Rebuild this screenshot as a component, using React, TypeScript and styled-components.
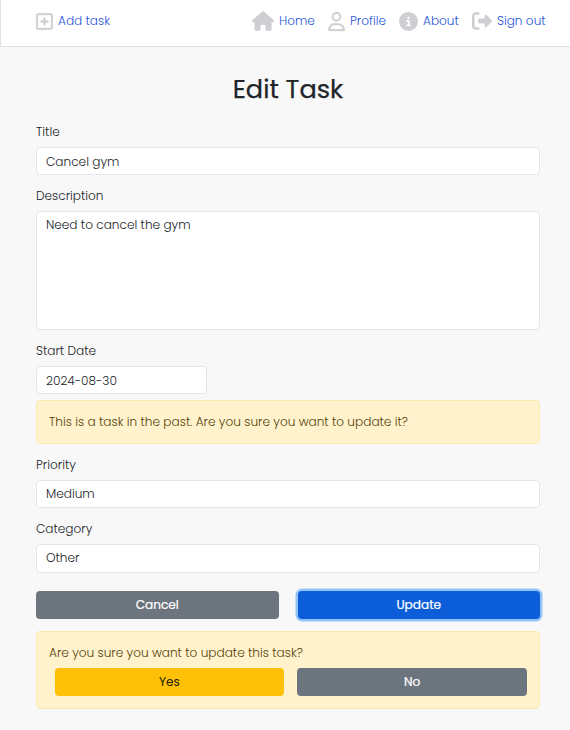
import React from "react";
import styled, { createGlobalStyle, css } from "styled-components";
import {
  FaCircleInfo,
  FaHouse,
  FaRegSquarePlus,
  FaRegUser,
  FaRightFromBracket,
} from "react-icons/fa6";

const GlobalStyle = createGlobalStyle`
  *, *::before, *::after { box-sizing: border-box; }
  body {
    margin: 0;
    background: #f8f8f8;
    color: #212529;
    font-family: Poppins, Inter, "Open Sans", sans-serif;
    font-size: 12.12px;
    font-weight: 300;
    line-height: 18px;
  }
`;

const Page = styled.div`
  min-height: 730px;
  overflow: hidden;
`;

const Navbar = styled.nav`
  display: flex;
  justify-content: space-between;
  height: 47px;
  padding: 10px 24px 0 33.5px;
  background: #fff;
  border-left: 1px solid #dee0e2;
  border-bottom: 1px solid #dee0e2;
`;

const NavGroup = styled.div`
  display: flex;
  height: 22px;
`;

const NavLink = styled.a<{ $width: number; $gap?: number; $outlined?: boolean }>`
  display: flex;
  align-items: center;
  gap: ${(p) => p.$gap ?? 5}px;
  width: ${(p) => p.$width}px;
  color: #2856d8;
  text-decoration: none;
  white-space: nowrap;

  svg {
    flex: none;
    color: #cfced3;
    overflow: visible;
    stroke-width: ${(p) => (p.$outlined ? 8 : 0)}px;
  }
`;

const Form = styled.form`
  display: flex;
  flex-direction: column;
  width: 504px;
  margin-left: 36px;
`;

const Heading = styled.h1`
  margin: 24px 0 0;
  height: 52px;
  font-size: 25.6px;
  font-weight: 400;
  line-height: 36px;
  text-align: center;
  -webkit-text-stroke: 0.25px currentColor;
`;

const Field = styled.div<{ $before?: number; $after?: number }>`
  display: flex;
  flex-direction: column;
  margin-top: ${(p) => p.$before ?? 0}px;
  margin-bottom: ${(p) => p.$after ?? 12}px;
`;

const Label = styled.label`
  height: 24px;
`;

const control = css`
  display: block;
  width: 100%;
  height: 28px;
  margin: 0;
  padding: 0 9px;
  border: 1px solid #e3e5e8;
  border-radius: 4px;
  outline: none;
  background: #fff;
  color: #212529;
  font: inherit;
`;

const Input = styled.input<{ $width?: number }>`
  ${control}
  width: ${(p) => (p.$width ? `${p.$width}px` : "100%")};
  padding-top: 2px;
`;

const TextArea = styled.textarea`
  ${control}
  height: 119px;
  padding: 4px 9px;
  resize: none;
`;

const Select = styled.select<{ $height?: number }>`
  ${control}
  height: ${(p) => p.$height ?? 28}px;
  padding-bottom: ${(p) => (p.$height ? 1 : 0)}px;
  appearance: none;
`;

const Alert = styled.div<{ $height: number; $before?: number }>`
  height: ${(p) => p.$height}px;
  margin-top: ${(p) => p.$before ?? 0}px;
  padding: 12px;
  border: 1px solid #fbe8b0;
  border-radius: 4px;
  background: #fff2cd;
  color: #574409;
`;

const Message = styled.p`
  margin: 0;
`;

const ButtonRow = styled.div<{ $inset?: boolean }>`
  display: grid;
  grid-template-columns: 1fr 1fr;
  column-gap: ${(p) => (p.$inset ? 13 : 19)}px;
  margin: ${(p) => (p.$inset ? "6px 0 0 5.5px" : "6px 0 0")};
`;

const tones = {
  secondary: css`
    background: #6c757d;
    color: #fff;
  `,
  primary: css`
    background: #0b5ed7;
    color: #fff;
    box-shadow: 0 0 0 2.5px #94c2fb;
  `,
  warning: css`
    background: #ffc107;
    color: #211c0c;
    -webkit-text-stroke-width: 0;
  `,
};

const Button = styled.button<{ $tone: keyof typeof tones }>`
  height: 28.4px;
  padding: 0 0 1px;
  border: 0;
  border-radius: 4px;
  font: inherit;
  font-weight: 400;
  -webkit-text-stroke-width: 0.2px;
  ${(p) => tones[p.$tone]}
`;

export default function App() {
  return (
    <Page>
      <GlobalStyle />
      <Navbar>
        <NavGroup>
          <NavLink $width={80} $gap={4.5} $outlined>
            <FaRegSquarePlus size={19} />
            Add task
          </NavLink>
        </NavGroup>
        <NavGroup>
          <NavLink $width={75}>
            <FaHouse size={22} />
            Home
          </NavLink>
          <NavLink $width={72} $gap={4} $outlined>
            <FaRegUser size={19} />
            Profile
          </NavLink>
          <NavLink $width={73}>
            <FaCircleInfo size={19} />
            About
          </NavLink>
          <NavLink $width={74}>
            <FaRightFromBracket size={20} />
            Sign out
          </NavLink>
        </NavGroup>
      </Navbar>
      <Form onSubmit={(e) => e.preventDefault()}>
        <Heading>Edit Task</Heading>
        <Field>
          <Label htmlFor="title">Title</Label>
          <Input id="title" defaultValue="Cancel gym" />
        </Field>
        <Field>
          <Label htmlFor="description">Description</Label>
          <TextArea id="description" defaultValue="Need to cancel the gym" />
        </Field>
        <Field $after={6}>
          <Label htmlFor="start">Start Date</Label>
          <Input id="start" defaultValue="2024-08-30" $width={171} />
        </Field>
        <Alert $height={44}>
          <Message>
            This is a task in the past. Are you sure you want to update it?
          </Message>
        </Alert>
        <Field $before={12}>
          <Label htmlFor="priority">Priority</Label>
          <Select id="priority" defaultValue="Medium">
            <option>Medium</option>
          </Select>
        </Field>
        <Field>
          <Label htmlFor="category">Category</Label>
          <Select id="category" defaultValue="Other" $height={29}>
            <option>Other</option>
          </Select>
        </Field>
        <ButtonRow>
          <Button type="button" $tone="secondary">Cancel</Button>
          <Button type="submit" $tone="primary">Update</Button>
        </ButtonRow>
        <Alert $height={78.5} $before={11.6}>
          <Message>Are you sure you want to update this task?</Message>
          <ButtonRow $inset>
            <Button type="button" $tone="warning">Yes</Button>
            <Button type="button" $tone="secondary">No</Button>
          </ButtonRow>
        </Alert>
      </Form>
    </Page>
  );
}
